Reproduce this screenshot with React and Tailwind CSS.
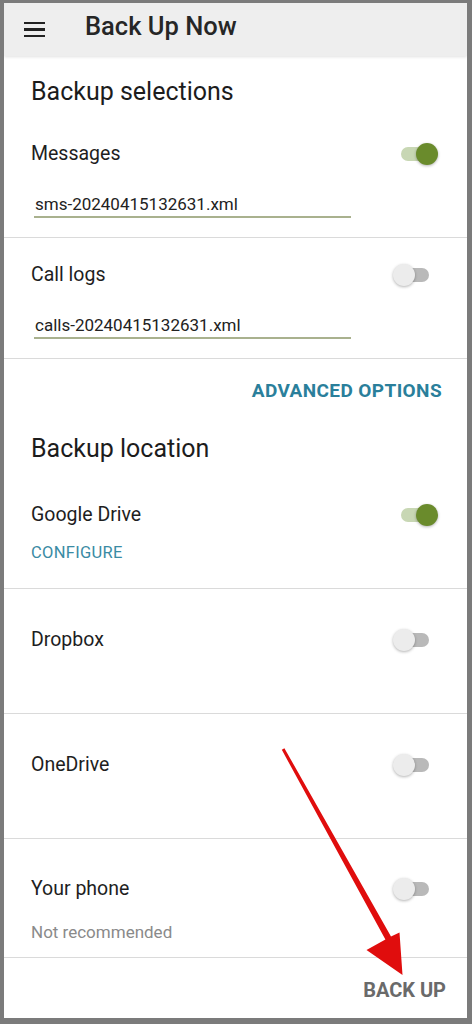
import React from "react";

const Switch = ({ on }) => (
  <div className="relative w-[46px] h-[24px] shrink-0">
    <div
      className={`absolute left-[9px] top-[5px] w-[28px] h-[14px] rounded-full ${
        on ? "bg-[#c8d7b4]" : "bg-[#b9b9b9]"
      }`}
    />
    <div
      className={`absolute top-[1px] w-[22px] h-[22px] rounded-full shadow-[0_1px_3px_rgba(0,0,0,0.3)] ${
        on ? "left-[24px] bg-[#6a8b2c]" : "left-[1px] bg-[#ececec]"
      }`}
    />
  </div>
);

const Row = ({ label, on }) => (
  <div className="flex items-center justify-between h-[28px] pl-[27px] pr-[29px]">
    <span className="text-[19.5px] leading-[28px] text-[#1e1e1e]">{label}</span>
    <Switch on={on} />
  </div>
);

const FileField = ({ value }) => (
  <div className="ml-[30px] w-[317px] border-b-2 border-[#a9b18e]">
    <div className="pl-[1px] text-[17px] leading-[24px] text-[#222]">{value}</div>
  </div>
);

const Divider = () => <div className="h-px bg-[#dadada]" />;

export default function App() {
  return (
    <div
      className="h-[1024px] bg-[#7b7b7b] pt-[3px] pl-[4px] pr-[5px] pb-[6px]"
      style={{ fontFamily: "Roboto, 'Noto Sans', sans-serif" }}
    >
      <div className="relative h-full bg-white flex flex-col overflow-hidden">
        {/* header */}
        <div className="relative z-10 h-[53px] shrink-0 bg-[#eeeeee] flex items-center shadow-[0_1px_3px_rgba(0,0,0,0.12)]">
          <div className="ml-[20px] w-[21px] flex flex-col gap-[4px]">
            <div className="h-[2.5px] bg-[#222]" />
            <div className="h-[2.5px] bg-[#222]" />
            <div className="h-[2.5px] bg-[#222]" />
          </div>
          <span className="ml-[40px] text-[25.5px] leading-[28px] font-medium text-[#262626] -mt-[7px]">
            Back Up Now
          </span>
        </div>

        {/* backup selections */}
        <div className="h-[69px] pt-[22px] pl-[27px] text-[25px] leading-[28px] text-[#1c1c1c]">
          Backup selections
        </div>

        <div className="pt-[15px] pb-[19px]">
          <Row label="Messages" on />
          <div className="mt-[24px]">
            <FileField value="sms-20240415132631.xml" />
          </div>
        </div>
        <Divider />

        <div className="pt-[23px] pb-[19px]">
          <Row label="Call logs" />
          <div className="mt-[24px]">
            <FileField value="calls-20240415132631.xml" />
          </div>
        </div>
        <Divider />

        {/* location */}
        <div className="pt-[20px] pb-[25px]">
          <div className="flex justify-end pr-[25px]">
            <span className="text-[19px] leading-[24px] font-bold tracking-[0.4px] text-[#2a7f9b]">
              ADVANCED OPTIONS
            </span>
          </div>
          <div className="mt-[32px] pl-[27px] text-[25px] leading-[28px] text-[#1c1c1c]">
            Backup location
          </div>
          <div className="mt-[38px]">
            <Row label="Google Drive" on />
          </div>
          <div className="mt-[14px] pl-[27px] text-[16.5px] leading-[20px] tracking-[0.3px] text-[#3a8ba4]">
            CONFIGURE
          </div>
        </div>
        <Divider />

        <div className="h-[124px] pt-[37px]">
          <Row label="Dropbox" />
        </div>
        <Divider />

        <div className="h-[124px] pt-[37px]">
          <Row label="OneDrive" />
        </div>
        <Divider />

        <div className="pt-[36px] pb-[15px]">
          <Row label="Your phone" />
          <div className="mt-[19px] pl-[27px] text-[17px] leading-[20px] text-[#8a8a8a]">
            Not recommended
          </div>
        </div>
        <Divider />

        <div className="flex justify-end pt-[20px] pr-[21px]">
          <span className="text-[20px] leading-[24px] font-bold text-[#6a6a6a]">BACK UP</span>
        </div>

        {/* annotation arrow */}
        <svg
          className="absolute left-0 top-0 pointer-events-none"
          width="463"
          height="1015"
          viewBox="4 3 463 1015"
        >
          <polygon
            points="281.8,749.8 284.4,748.2 391,936.5 399.5,932.5 402.5,975 366.5,950 385.4,939.5"
            fill="#e00d0d"
          />
        </svg>
      </div>
    </div>
  );
}
